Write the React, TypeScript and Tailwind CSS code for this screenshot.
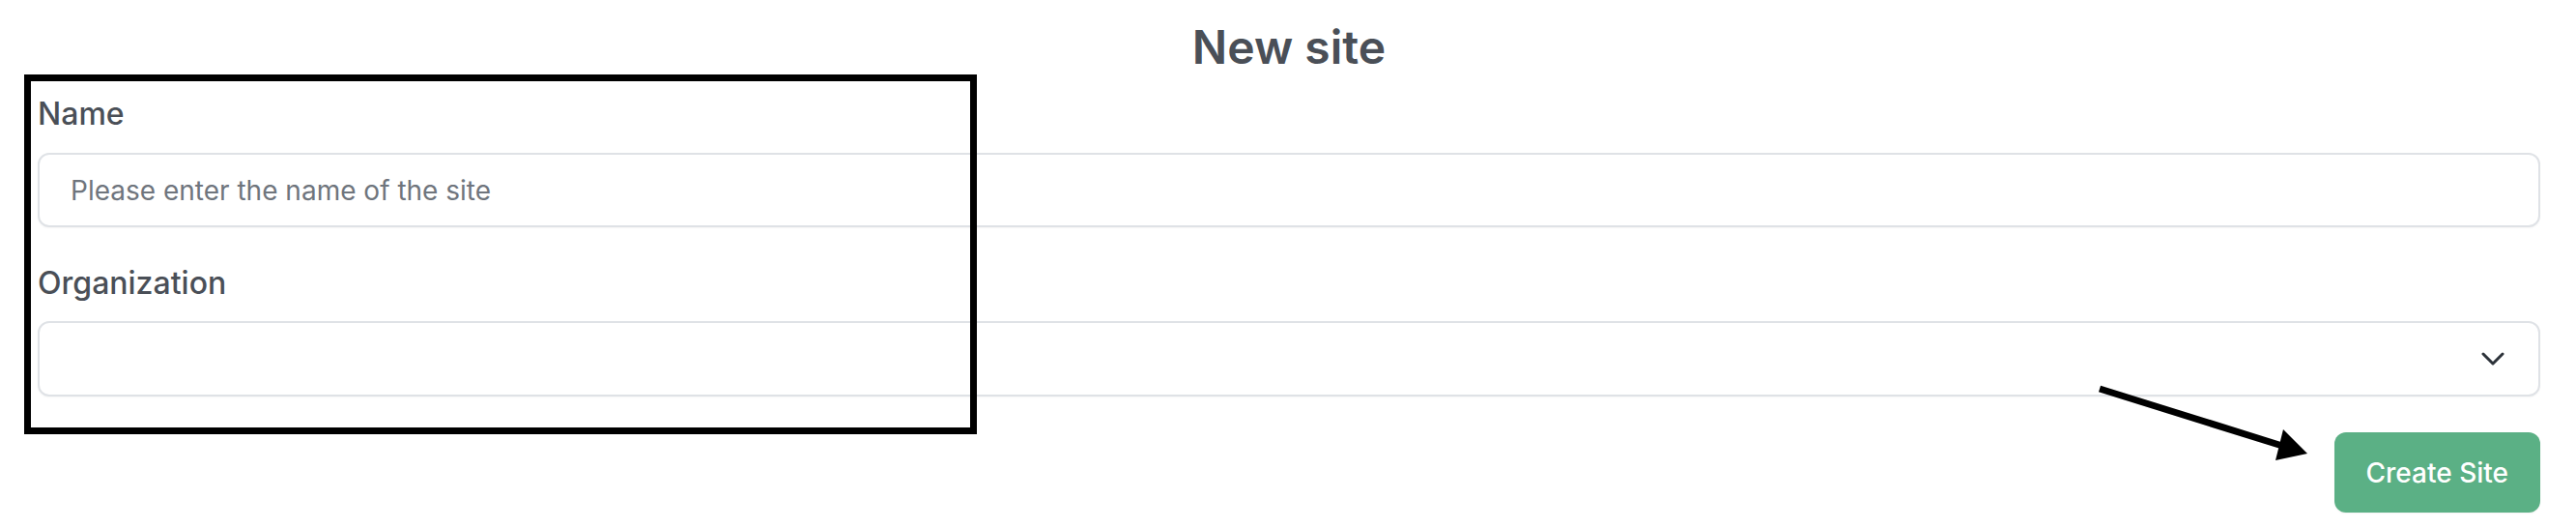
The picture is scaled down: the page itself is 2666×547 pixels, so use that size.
import React from "react";

export default function App() {
  return (
    <div
      className="relative h-[547px] w-full overflow-hidden bg-white"
      style={{ fontFamily: "Inter, 'Noto Sans', sans-serif" }}
    >
      <div className="pl-[39px] pr-[37px] pt-[25px]">
        <h1 className="text-center text-[48px] font-semibold leading-none text-[#4a4f57]">
          New site
        </h1>
        <label className="mt-[29px] block text-[32px] font-medium leading-none text-[#4a4f57]">
          Name
        </label>
        <input
          type="text"
          placeholder="Please enter the name of the site"
          className="mt-[24px] block h-[77px] w-full rounded-[12px] border-2 border-[#dfe2e6] bg-white px-[32px] text-[28px] text-[#374151] shadow-[0_1px_2px_rgba(0,0,0,0.04)] outline-none placeholder:text-[#6f757d]"
        />
        <label className="mt-[42px] block text-[32px] font-medium leading-none text-[#4a4f57]">
          Organization
        </label>
        <div className="mt-[23px] flex h-[78px] w-full items-center justify-end rounded-[12px] border-2 border-[#dfe2e6] bg-white pr-[35px] shadow-[0_1px_2px_rgba(0,0,0,0.04)]">
          <svg width="24" height="14" viewBox="0 0 24 14" fill="none">
            <path
              d="M2 2 L12 12 L22 2"
              stroke="#2d333a"
              strokeWidth="3"
              strokeLinecap="round"
              strokeLinejoin="round"
            />
          </svg>
        </div>
        <div className="mt-[37px] flex justify-end">
          <button className="h-[83px] rounded-[12px] bg-[#5bb085] px-[33px] text-[28px] font-medium text-white shadow-[0_1px_2px_rgba(0,0,0,0.05)]">
            Create Site
          </button>
        </div>
      </div>

      {/* annotation box */}
      <div className="pointer-events-none absolute left-[25px] top-[77px] h-[372px] w-[986px] border-[7px] border-black" />

      {/* annotation arrow */}
      <svg
        className="pointer-events-none absolute left-0 top-0"
        width="2666"
        height="547"
        viewBox="0 0 2666 547"
      >
        <line x1="2173" y1="402" x2="2362" y2="461" stroke="#000" strokeWidth="7" />
        <polygon points="2388,469 2363,444 2355,476" fill="#000" />
      </svg>
    </div>
  );
}
